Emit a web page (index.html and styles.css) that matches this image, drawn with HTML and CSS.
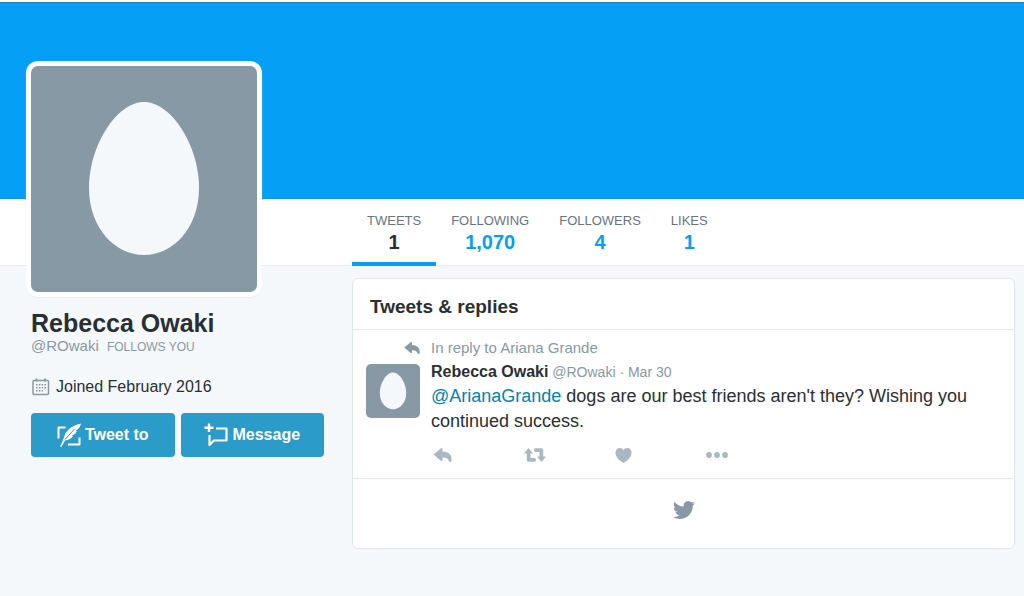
FILE: index.html
```html
<!DOCTYPE html>
<html lang="en">
<head>
    <meta charset="UTF-8">
    <meta name="viewport" content="width=device-width, initial-scale=1.0">
    <title>Rebecca Owaki (@ROwaki)</title>
    <link rel="stylesheet" href="styles.css">
</head>
<body>

    <header class="banner"></header>

    <nav class="profile-nav">
        <a href="#" class="stat active"><span class="stat-label">TWEETS</span><span class="stat-value">1</span></a>
        <a href="#" class="stat"><span class="stat-label">FOLLOWING</span><span class="stat-value">1,070</span></a>
        <a href="#" class="stat"><span class="stat-label">FOLLOWERS</span><span class="stat-value">4</span></a>
        <a href="#" class="stat"><span class="stat-label">LIKES</span><span class="stat-value">1</span></a>
    </nav>

    <div class="page">
        <aside class="sidebar">
            <div class="profile-avatar">
                <svg viewBox="0 0 226 226">
                    <path fill="#f5f8fa" d="M113 36C140 36 168 79 168 122C168 162 142 189 113 189C84 189 58 162 58 122C58 79 86 36 113 36Z"/>
                </svg>
            </div>

            <div class="profile-info">
                <h1>Rebecca Owaki</h1>
                <p class="handle"><a href="#">@ROwaki</a> <span class="follows">FOLLOWS YOU</span></p>
                <p class="joined">
                    <svg width="19" height="18" viewBox="0 0 19 18">
                        <rect x="2" y="2.500" width="15.500" height="14" rx="1" fill="none" stroke="#8899a6" stroke-width="1.500"/>
                        <path d="M5.500 .5v3M14 .5v3" stroke="#8899a6" stroke-width="2"/>
                        <path d="M5 6.800h10M5 9.800h10M5 12.800h7" stroke="#8899a6" stroke-width="1.600" stroke-dasharray="1.600 1.200"/>
                    </svg>
                    Joined February 2016
                </p>
                <div class="profile-buttons">
                    <button type="button">
                        <svg width="24" height="24" viewBox="0 0 24 24">
                            <path d="M1.500 15.500V4.500H8.500M11 21.500H22.500V14.500" fill="none" stroke="#fff" stroke-width="2" stroke-linejoin="round"/>
                            <path fill="#fff" d="M24 .5C17 2 10 6 7.800 12C6.800 15 5.500 19 3 23.500L4.500 24L8 17.500C12 17 14.500 15.500 16 13L14.800 12.500C17.500 11.500 19 10 19.800 8L18.500 7.800C21.500 6.500 23 4 24 .5Z"/>
                            <path d="M8 16.500L17.500 6" stroke="#2b9bc9" stroke-width="1"/>
                        </svg>
                        Tweet to
                    </button>
                    <button type="button">
                        <svg width="24" height="24" viewBox="0 0 24 24">
                            <path d="M5 .5V9M.5 4.700H9.500" stroke="#fff" stroke-width="2.400"/>
                            <path d="M12 5.500H22.500V17.500H10L5.500 22V12" fill="none" stroke="#fff" stroke-width="2.200" stroke-linejoin="round"/>
                        </svg>
                        Message
                    </button>
                </div>
            </div>
        </aside>

        <main class="timeline">
            <h2>Tweets &amp; replies</h2>

            <article class="tweet">
                <svg class="reply-icon" width="16" height="12" viewBox="0 0 18 14">
                    <path fill="#8899a6" d="M0 6.500L7.500 .2Q9 -.3 9 1.200V3.500C15 3.500 18 7 18 11.500V13Q17 14.500 15.500 13.500C15 10.500 13 9.500 9 9.500V12Q9 13.500 7.500 12.900Z"/>
                </svg>
                <a href="#" class="context">In reply to Ariana Grande</a>

                <div class="tweet-avatar">
                    <svg viewBox="0 0 226 226">
                        <path fill="#f5f8fa" d="M113 36C140 36 168 79 168 122C168 162 142 189 113 189C84 189 58 162 58 122C58 79 86 36 113 36Z"/>
                    </svg>
                </div>
                <div class="tweet-body">
                    <p class="tweet-meta"><a href="#" class="author">Rebecca Owaki</a> @ROwaki · Mar 30</p>
                    <p class="tweet-text"><a href="#">@ArianaGrande</a> dogs are our best friends aren't they? Wishing you continued success.</p>
                    <div class="tweet-actions">
                        <button type="button" aria-label="Reply">
                            <svg width="19" height="14" viewBox="0 0 18 14">
                                <path d="M0 6.500L7.500 .2Q9 -.3 9 1.200V3.500C15 3.500 18 7 18 11.500V13Q17 14.500 15.500 13.500C15 10.500 13 9.500 9 9.500V12Q9 13.500 7.500 12.900Z"/>
                            </svg>
                        </button>
                        <button type="button" aria-label="Retweet">
                            <svg width="22" height="14" viewBox="0 0 22 14">
                                <path d="M4.500 0L9 5.500H6.500V10H10.500Q12 10 12 12Q12 13.700 10.500 13.700H4.500Q2.800 13.700 2.800 12V5.500H0ZM11.500 .3H17.500Q19.200 .3 19.200 2V8.500H22L17.500 14L13 8.500H15.500V4H11.500Q10 4 10 2Q10 .3 11.500 .3Z"/>
                            </svg>
                        </button>
                        <button type="button" aria-label="Like">
                            <svg width="17" height="15" viewBox="0 0 16 15">
                                <path d="M8 15C3 12 0 8.500 0 4.500C0 2 1.800 0 4.200 0C6 0 7.300 .8 8 2.400C8.700 .8 10 0 11.800 0C14.200 0 16 2 16 4.500C16 8.500 13 12 8 15Z"/>
                            </svg>
                        </button>
                        <button type="button" aria-label="More">
                            <svg width="22" height="6" viewBox="0 0 22 6">
                                <circle cx="3" cy="3" r="2.900"/>
                                <circle cx="11" cy="3" r="2.900"/>
                                <circle cx="19" cy="3" r="2.900"/>
                            </svg>
                        </button>
                    </div>
                </div>
            </article>

            <div class="timeline-end">
                <svg width="22" height="22" viewBox="0 0 24 24">
                    <path fill="#8899a6" d="M23.950 4.570a10 10 0 0 1-2.820.770 4.960 4.960 0 0 0 2.160-2.720c-.950.550-2 .960-3.130 1.180a4.920 4.920 0 0 0-8.380 4.480C7.690 8.090 4.070 6.130 1.640 3.160a4.820 4.820 0 0 0-.670 2.480c0 1.710.870 3.210 2.190 4.100a4.900 4.900 0 0 1-2.230-.620v.060a4.920 4.920 0 0 0 3.950 4.830 5 5 0 0 1-2.210.080 4.940 4.940 0 0 0 4.600 3.420A9.870 9.870 0 0 1 0 19.540a13.990 13.990 0 0 0 7.560 2.210c9.050 0 14-7.500 14-13.980 0-.210 0-.420-.020-.630a9.940 9.940 0 0 0 2.410-2.570z"/>
                </svg>
            </div>
        </main>
    </div>

</body>
</html>
```
FILE: styles.css
```css
* {
    box-sizing: border-box;
}

body {
    margin: 0;
    padding-top: 2px;
    background: linear-gradient(#fff 2px, #f5f8fa 2px);
    font-family: "Liberation Sans", Arial, sans-serif;
    color: #292f33;
}

h1, h2, p {
    margin: 0;
}

a {
    color: inherit;
    text-decoration: none;
}

svg {
    display: block;
}

button {
    padding: 0;
    border: none;
    background: none;
    font-family: inherit;
    cursor: pointer;
}

.banner {
    height: 197px;
    background-color: #059ff5;
    border-top: 1px solid #1683c9;
    border-bottom: 1px solid #0c93e2;
}

.profile-nav {
    display: flex;
    height: 67px;
    padding-left: 352px;
    background-color: #fff;
    box-shadow: inset 0 -1px #e6ecf0;
}

.stat {
    display: flex;
    flex-direction: column;
    align-items: center;
    padding: 14px 15px 0;
}

.stat.active {
    border-bottom: 4px solid #059ff5;
}

.stat-label {
    font-size: 13px;
    line-height: 16px;
    color: #66757f;
}

.stat-value {
    font-size: 20px;
    line-height: 26px;
    font-weight: bold;
    color: #059ff5;
}

.stat.active .stat-value {
    color: #292f33;
}

.page {
    display: grid;
    grid-template-columns: 298px 1fr;
    column-gap: 28px;
    align-items: start;
    padding: 0 9px 48px 26px;
}

/* avatar is pulled up over the nav and the banner */
.profile-avatar {
    position: relative;
    width: 236px;
    margin-top: -205px;
    border: 5px solid #fff;
    border-radius: 12px;
    background-color: #fff;
    box-shadow: 0 1px 1px #e6ecf0;
}

.profile-avatar svg {
    border-radius: 7px;
    background-color: #8899a6;
}

.profile-info {
    padding: 12px 0 0 5px;
}

h1 {
    font-size: 25px;
    line-height: 28px;
}

.handle {
    font-size: 15px;
    line-height: 18px;
    color: #8899a6;
}

.follows {
    margin-left: 4px;
    font-size: 12px;
}

.joined {
    display: flex;
    align-items: center;
    gap: 6px;
    margin-top: 21px;
    font-size: 16px;
    line-height: 20px;
}

.profile-buttons {
    display: flex;
    gap: 6px;
    margin-top: 16px;
}

.profile-buttons button {
    display: flex;
    flex: 1;
    align-items: center;
    justify-content: center;
    gap: 4px;
    height: 44px;
    border-radius: 4px;
    background-color: #2b9bc9;
    font-size: 16px;
    font-weight: bold;
    color: #fff;
}

.timeline {
    margin-top: 12px;
    border: 1px solid #e1e8ed;
    border-radius: 6px;
    background-color: #fff;
}

h2 {
    padding: 16px 17px 10px;
    border-bottom: 1px solid #e1e8ed;
    font-size: 19px;
    line-height: 24px;
}

.tweet {
    display: grid;
    grid-template-columns: 54px 1fr;
    column-gap: 11px;
    padding: 8px 13px 13px;
    border-bottom: 1px solid #e1e8ed;
}

.reply-icon {
    place-self: center end;
}

.context {
    font-size: 15px;
    line-height: 20px;
    color: #8899a6;
}

.tweet-avatar {
    margin-top: 6px;
}

.tweet-avatar svg {
    border-radius: 5px;
    background-color: #8899a6;
}

.tweet-meta {
    padding: 4px 0 2px;
    font-size: 14px;
    line-height: 20px;
    color: #8899a6;
}

.author {
    font-size: 16px;
    font-weight: bold;
    color: #292f33;
}

.tweet-text {
    font-size: 18px;
    line-height: 25px;
}

.tweet-text a {
    color: #0084b4;
}

.tweet-actions {
    display: flex;
    margin: 11px 0 0 2px;
}

.tweet-actions button {
    display: flex;
    align-items: center;
    width: 91px;
    height: 20px;
}

.tweet-actions path, .tweet-actions circle {
    fill: #aab8c2;
}

.timeline-end {
    display: flex;
    justify-content: center;
    padding: 20px 0 27px;
}
```
